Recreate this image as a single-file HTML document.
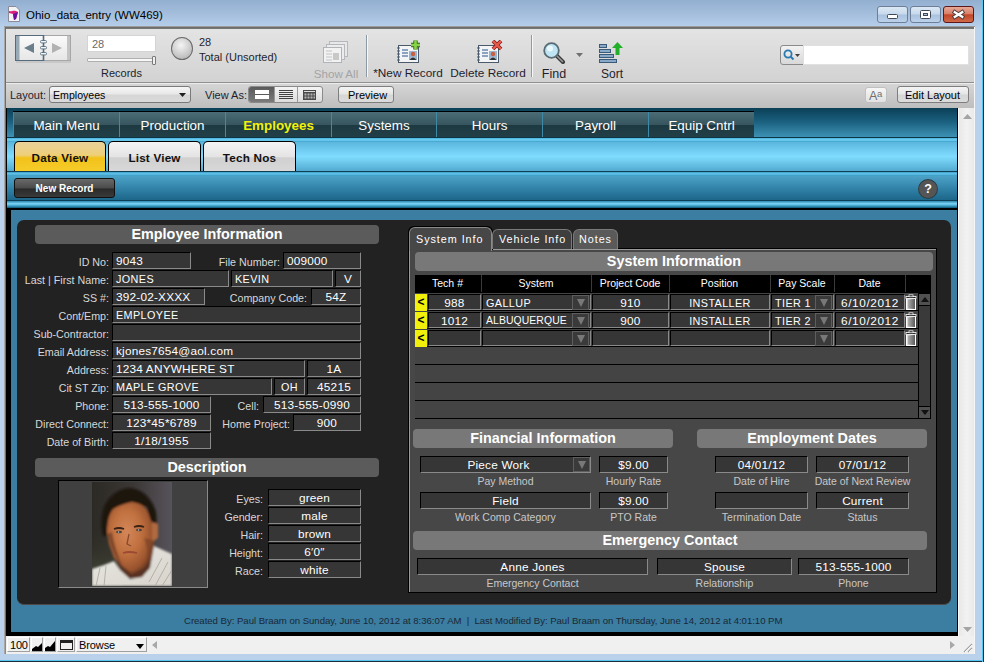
<!DOCTYPE html>
<html><head><meta charset="utf-8">
<style>
*{margin:0;padding:0;box-sizing:border-box}
html,body{width:984px;height:662px;overflow:hidden;background:#b9d1ea;font-family:"Liberation Sans",sans-serif}
.a{position:absolute}
.t{position:absolute;white-space:nowrap;line-height:1}
#title{left:0;top:0;width:984px;height:28px;background:linear-gradient(#93afd0,#a4bedc 50%,#b8d0ec)}
.wb{position:absolute;top:6px;height:17px;border:1px solid #6d7f97;border-radius:3px;background:linear-gradient(#e4edf7,#c7d7ea 45%,#aec3de 50%,#c3d6ec)}
#toolbar{left:4px;top:26px;width:971px;height:57px;background:linear-gradient(#e4e4e4,#d2d2d2);border-top:1px solid #9a9a9a;box-shadow:inset 0 1px 0 #6e6e6e,inset 0 2px 0 #767676}
#layoutbar{left:5px;top:82px;width:970px;height:26px;background:linear-gradient(#d6d6d6,#bebebe);border-top:1px solid #909090;box-shadow:inset 0 1px 0 #ececec;border-left:1px solid #8a8a8a}
.btn{position:absolute;border:1px solid #7e7e7e;border-radius:3px;background:linear-gradient(#f4f4f4,#e6e6e6 45%,#d6d6d6 55%,#dcdcdc);font-size:11px;color:#000;text-align:center}
.tl{font-size:11px;color:#1e1e2e}
</style></head><body>
<!-- title bar -->
<div id="title" class="a"></div>
<svg class="a" style="left:8px;top:6px" width="12" height="16" viewBox="0 0 12 16">
<path d="M0.5 0.5H8L11.5 4V15.5H0.5Z" fill="#f4f4f4" stroke="#8a8a9a"/>
<path d="M1 5C3 6 5 4 8 5L10 6 8 13 6 14 5 8 1 7Z" fill="#e0207a"/>
<path d="M5 8 6 14 8 13 10 6Z" fill="#6a10a0"/>
</svg>
<div class="t" style="left:26px;top:10px;font-size:11.5px;color:#000">Ohio_data_entry (WW469)</div>
<div class="wb" style="left:877px;width:31px;background:linear-gradient(#dce8f4,#c8d9ec 48%,#a9c1dd 52%,#bcd2ea)"><svg class="a" style="left:0;top:0" width="29" height="15"><rect x="9.5" y="7.5" width="10" height="4" rx="1" fill="#fff" stroke="#404858"/></svg></div>
<div class="wb" style="left:910px;width:31px;background:linear-gradient(#dce8f4,#c8d9ec 48%,#a9c1dd 52%,#bcd2ea)"><svg class="a" style="left:0;top:0" width="29" height="15"><rect x="9.5" y="3.5" width="10" height="8" rx="1" fill="#fff" stroke="#404858"/><rect x="12.5" y="6.5" width="4" height="2" fill="#a8c4dc" stroke="#404858"/></svg></div>
<div class="wb" style="left:943px;width:31px;border-color:#5a1818;background:linear-gradient(#e8a898,#d88068 45%,#c24628 52%,#d06a4a)"><svg class="a" style="left:0;top:0" width="29" height="15"><path d="M10.8 5.2 18.2 9.8M18.2 5.2 10.8 9.8" stroke="#4a3838" stroke-width="4.2" stroke-linecap="square"/><path d="M10.8 5.2 18.2 9.8M18.2 5.2 10.8 9.8" stroke="#fff" stroke-width="2.4" stroke-linecap="square"/></svg></div>

<!-- toolbar -->
<div id="toolbar" class="a"></div>
<div id="layoutbar" class="a"></div>
<!-- book icon -->
<svg class="a" style="left:14px;top:34px" width="58" height="30" viewBox="0 0 58 30">
<defs><linearGradient id="pg" x1="0" y1="0" x2="0" y2="1"><stop offset="0" stop-color="#fbfbfb"/><stop offset="1" stop-color="#e6e6e6"/></linearGradient></defs>
<rect x="2" y="26" width="55" height="3" fill="#000" opacity=".08"/>
<rect x="29.5" y="1.5" width="27" height="25" fill="url(#pg)" stroke="#a6a6a6"/>
<rect x="53" y="2" width="3" height="24" fill="#c4c4c4"/>
<rect x="1.5" y="1.5" width="28" height="25" fill="url(#pg)" stroke="#566c7c"/>
<rect x="2" y="2" width="3.5" height="24" fill="#98aab6"/>
<path d="M10 14 20 9V19Z" fill="#6a7e8c"/>
<path d="M38 9 48 14 38 19Z" fill="#b2b2b2"/>
<path d="M29.5 1V27" stroke="#566c7c" stroke-width="1.6"/>
<rect x="26.5" y="6.5" width="6" height="2.4" rx="1" fill="#f4f4f4" stroke="#566c7c" stroke-width=".9"/>
<rect x="26.5" y="12.5" width="6" height="2.4" rx="1" fill="#f4f4f4" stroke="#566c7c" stroke-width=".9"/>
<rect x="26.5" y="18.5" width="6" height="2.4" rx="1" fill="#f4f4f4" stroke="#566c7c" stroke-width=".9"/>
</svg>
<!-- record input -->
<div class="a" style="left:87px;top:35px;width:69px;height:17px;background:#fff;border:1px solid #d4d4d4"></div>
<div class="t" style="left:92px;top:39px;font-size:11px;color:#6a6a6a">28</div>
<div class="a" style="left:87px;top:58px;width:67px;height:4px;border:1px solid #b0b0b0;background:#f8f8f8;border-radius:1px"></div>
<div class="a" style="left:152px;top:56px;width:4px;height:9px;border:1px solid #7a7a7a;background:#f0f0f0;border-radius:1px"></div>
<div class="t tl" style="left:101px;top:68px;font-size:11px">Records</div>
<div class="a" style="left:171px;top:37px;width:22px;height:23px;border-radius:50%;border:1px solid #6a6a6a;background:radial-gradient(circle at 45% 35%,#f4f4f4,#c8c8c8 60%,#a8a8a8)"></div>
<div class="t tl" style="left:199px;top:37px">28</div>
<div class="t tl" style="left:199px;top:52px">Total (Unsorted)</div>
<!-- show all -->
<svg class="a" style="left:323px;top:41px" width="26" height="23" viewBox="0 0 26 23">
<rect x="6.5" y="0.5" width="18" height="15" fill="#e8e8e8" stroke="#b4b8bc"/>
<rect x="3.5" y="3.5" width="18" height="15" fill="#ececec" stroke="#b4b8bc"/>
<rect x="0.5" y="6.5" width="18" height="15" fill="#f2f2f2" stroke="#b0b4b8"/>
<path d="M3 10h6M3 13h6M3 16h6M3 19h6" stroke="#c0c4c8"/><rect x="10" y="12" width="6" height="7" fill="#c8c8c8"/></svg>
<div class="t tl" style="left:296px;width:80px;text-align:center;top:68px;color:#a4a4a4;font-size:11.6px">Show All</div>
<div class="a" style="left:366px;top:35px;width:1px;height:42px;background:#8c9aa6;box-shadow:1px 0 0 #f8f8f8"></div>
<!-- new record -->
<svg class="a" style="left:397px;top:40px" width="26" height="24" viewBox="0 0 26 24">
<rect x="1.5" y="5.5" width="20" height="17" fill="#f2f4f6" stroke="#4a5a6a"/>
<path d="M0 8h3M0 11h3M0 14h3M0 17h3M0 20h3" stroke="#4a5a6a"/>
<path d="M5 10h6M5 13h6M5 16h6" stroke="#6a8ab0" stroke-width="1.5"/>
<rect x="12" y="11" width="8" height="9" fill="#9ab4d0"/><circle cx="16" cy="14" r="2.2" fill="#c86040"/><path d="M12.5 20Q16 15 19.5 20Z" fill="#303030"/>
<path d="M14 5h9M18.5 .5v9" stroke="#2a6a1a" stroke-width="4.4"/><path d="M14 5h9M18.5 .5v9" stroke="#8ad24a" stroke-width="2.6"/></svg>
<div class="t tl" style="left:368px;width:80px;text-align:center;top:68px;font-size:11.8px">*New Record</div>
<!-- delete record -->
<svg class="a" style="left:477px;top:40px" width="26" height="24" viewBox="0 0 26 24">
<rect x="1.5" y="5.5" width="20" height="17" fill="#f2f4f6" stroke="#4a5a6a"/>
<path d="M0 8h3M0 11h3M0 14h3M0 17h3M0 20h3" stroke="#4a5a6a"/>
<path d="M5 10h6M5 13h6M5 16h6" stroke="#6a8ab0" stroke-width="1.5"/>
<rect x="12" y="11" width="8" height="9" fill="#9ab4d0"/><circle cx="16" cy="14" r="2.2" fill="#c86040"/><path d="M12.5 20Q16 15 19.5 20Z" fill="#303030"/>
<path d="M16 1 24 9M24 1 16 9" stroke="#7a1a1a" stroke-width="3.8"/><path d="M16 1 24 9M24 1 16 9" stroke="#e85a4a" stroke-width="2.4"/></svg>
<div class="t tl" style="left:448px;width:80px;text-align:center;top:68px;font-size:11.8px">Delete Record</div>
<div class="a" style="left:531px;top:35px;width:1px;height:42px;background:#8c9aa6;box-shadow:1px 0 0 #f8f8f8"></div>
<!-- find -->
<svg class="a" style="left:543px;top:42px" width="23" height="22" viewBox="0 0 23 22">
<path d="M13 13 20 20" stroke="#3a3a3a" stroke-width="4" stroke-linecap="round"/><path d="M13.5 13.5 19.5 19.5" stroke="#9a9a9a" stroke-width="1.6" stroke-linecap="round"/>
<circle cx="8.5" cy="8.5" r="7.3" fill="#bfe4f4" stroke="#5a6a72" stroke-width="1.8"/><circle cx="7" cy="6.5" r="3" fill="#eaf8fc"/></svg>
<svg class="a" style="left:576px;top:53px" width="7" height="4"><path d="M0 0H7L3.5 4Z" fill="#707070"/></svg>
<div class="t tl" style="left:524px;width:60px;text-align:center;top:68px;font-size:12.5px">Find</div>
<!-- sort -->
<svg class="a" style="left:599px;top:41px" width="25" height="23" viewBox="0 0 25 23">
<rect x="0.5" y="3.5" width="7" height="3" fill="#8aa8c8" stroke="#3a5a7a"/><rect x="0.5" y="8.5" width="11" height="3" fill="#8aa8c8" stroke="#3a5a7a"/><rect x="0.5" y="13.5" width="14" height="3" fill="#8aa8c8" stroke="#3a5a7a"/><rect x="0.5" y="18.5" width="17" height="3" fill="#8aa8c8" stroke="#3a5a7a"/>
<path d="M18.5 1 24 7H20.5V14H16.5V7H13Z" fill="#22b02a"/></svg>
<div class="t tl" style="left:582px;width:60px;text-align:center;top:68px;font-size:12px">Sort</div>
<!-- search -->
<div class="a" style="left:780px;top:45px;width:24px;height:20px;border:1px solid #8a8a8a;border-radius:3px 0 0 3px;background:linear-gradient(#f2f2f2,#d8d8d8)"></div>
<svg class="a" style="left:783px;top:49px" width="18" height="12" viewBox="0 0 18 12"><circle cx="5" cy="5" r="3.6" fill="none" stroke="#2a7ab0" stroke-width="1.8"/><path d="M7.5 7.5 10.5 10.5" stroke="#2a7ab0" stroke-width="2"/><path d="M12 5h5l-2.5 3z" fill="#404040"/></svg>
<div class="a" style="left:803px;top:45px;width:166px;height:20px;background:#fff;border:1px solid #e0e0e0"></div>

<div class="t tl" style="left:10px;top:90px">Layout:</div>
<div class="btn" style="left:49px;top:86px;width:142px;height:17px;text-align:left;border-radius:3px;border-color:#7a7a7a;background:linear-gradient(#f6f6f6,#e8e8e8 45%,#d6d6d6 55%,#dadada)"><span class="t" style="left:3px;top:3px;font-size:10.6px">Employees</span><svg class="a" style="left:129px;top:6px" width="7" height="4"><path d="M0 0H7L3.5 4Z" fill="#202020"/></svg></div>
<div class="t tl" style="left:205px;top:90px">View As:</div>
<div class="a" style="left:248px;top:86px;width:75px;height:17px;border:1px solid #8a8a8a;border-radius:3px;background:linear-gradient(#f4f4f4,#dcdcdc);overflow:hidden">
<div class="a" style="left:0;top:0;width:25px;height:15px;background:linear-gradient(#5a5a5a,#7a7a7a)"></div>
<div class="a" style="left:25px;top:0;width:1px;height:15px;background:#9a9a9a"></div><div class="a" style="left:48px;top:0;width:1px;height:15px;background:#9a9a9a"></div>
<div class="a" style="left:6px;top:3px;width:14px;height:9px;background:#fff;border-bottom:2px solid #fff;box-shadow:inset 0 -4px 0 #fff"></div><div class="a" style="left:6px;top:7px;width:14px;height:1px;background:#5a5a5a"></div>
<svg class="a" style="left:30px;top:3px" width="14" height="10"><path d="M0 .5H14M0 2.5H14M0 4.5H14M0 6.5H14M0 8.5H14" stroke="#404040"/></svg>
<svg class="a" style="left:54px;top:3px" width="14" height="10"><rect x="0" y="0" width="13" height="10" fill="#4a4a4a"/><rect x="1" y="1" width="11" height="1" fill="#ddd"/><path d="M1.5 3.5h2v2h-2zM4.5 3.5h2v2h-2zM7.5 3.5h2v2h-2zM10.5 3.5h1.5v2h-1.5zM1.5 6.5h2v2h-2zM4.5 6.5h2v2h-2zM7.5 6.5h2v2h-2zM10.5 6.5h1.5v2h-1.5z" fill="#b4b4b4"/></svg>
</div>
<div class="btn" style="left:338px;top:86px;width:56px;height:17px;border-radius:3px"><span class="t" style="left:9px;top:3px;font-size:11px">Preview</span></div>
<div class="btn" style="left:865px;top:87px;width:22px;height:16px;border-color:#c0c0c0;background:linear-gradient(#f6f6f6,#e2e2e2)"><span class="t" style="left:3px;top:2px;font-size:12.5px;color:#6e6e6e;letter-spacing:-.5px">A</span><span class="t" style="left:11px;top:1px;font-size:9.5px;color:#6e6e6e">a</span></div>
<div class="btn" style="left:897px;top:86px;width:72px;height:17px"><span class="t" style="left:7px;top:3px;font-size:11px">Edit Layout</span></div>


<!-- FM content -->
<div class="a" style="left:6px;top:108px;width:952px;height:529px;background:#000"></div><div class="a" style="left:4px;top:27px;width:1px;height:627px;background:#a8a8a8"></div><div class="a" style="left:5px;top:27px;width:1px;height:627px;background:#6e6e6e"></div>
<div class="a" style="left:7px;top:108px;width:950px;height:33px;background:linear-gradient(#0b3f56,#1a5f7e 40%,#3f93b6 90%,#5ab2d4)"></div>
<!-- menu tabs -->
<div id="mtabs" class="a" style="left:13px;top:111px;width:741px;height:26px;background:#000"></div>
<div class="a" style="left:7px;top:137px;width:950px;height:1px;background:#0c3646"></div><div class="a" style="left:7px;top:138px;width:950px;height:4px;background:linear-gradient(#48b2da,#74d2f6 50%,#3a9ec6)"></div>
<!-- sub tab bar -->
<div class="a" style="left:7px;top:142px;width:950px;height:29px;background:linear-gradient(#5ab6dc,#80dcff 50%,#52aad0)"></div>
<div class="a" style="left:7px;top:171px;width:950px;height:1px;background:#0e3e54"></div>
<div class="a" style="left:7px;top:172px;width:950px;height:4px;background:linear-gradient(#3e9ec6,#62c4ec 45%,#3a98c0)"></div>
<div class="a" style="left:7px;top:176px;width:950px;height:24px;background:linear-gradient(#4ca2c8,#2e7ea4 60%,#1c6688)"></div>
<div class="a" style="left:7px;top:200px;width:950px;height:1px;background:#0e3e55"></div>
<div class="a" style="left:7px;top:201px;width:950px;height:7px;background:linear-gradient(#2a86ae,#7ed6f8 40%,#3a9ec6 70%,#0e5676)"></div>
<div class="a" style="left:11px;top:210px;width:946px;height:422px;background:#3b7ea2"></div>
<style>.mt{position:absolute;top:112px;height:25px;background:linear-gradient(#4b6c76,#36555e 52%,#1d3a43 52%,#223f48);color:#fff;font-size:13.4px;text-align:center;line-height:27px;border-left:1px solid #3f8aa6}
.st{position:absolute;top:141px;height:30px;border:1px solid #000;border-bottom:none;border-radius:5px 5px 0 0;font-weight:bold;font-size:11.7px;text-align:center;line-height:31px;color:#111;letter-spacing:.2px}</style>
<div class="mt" style="left:13px;width:106px;">Main Menu</div>
<div class="mt" style="left:119px;width:106px;">Production</div>
<div class="mt" style="left:225px;width:106px;font-weight:bold;color:#f2f20a;">Employees</div>
<div class="mt" style="left:331px;width:105px;">Systems</div>
<div class="mt" style="left:436px;width:106px;">Hours</div>
<div class="mt" style="left:542px;width:106px;">Payroll</div>
<div class="mt" style="left:648px;width:106px;">Equip Cntrl</div>
<div class="st" style="left:14px;width:92px;background:linear-gradient(#e8d29a,#efcf7a 45%,#f2c21a 55%,#f6cc2a)">Data View</div>
<div class="st" style="left:108px;width:93px;background:linear-gradient(#f4f4f4,#e4e4e4 50%,#d0d0d0 55%,#d8d8d8)">List View</div>
<div class="st" style="left:203px;width:93px;background:linear-gradient(#f4f4f4,#e4e4e4 50%,#d0d0d0 55%,#d8d8d8)">Tech Nos</div>
<div class="a" style="left:14px;top:178px;width:101px;height:20px;border:1px solid #111;border-radius:3px;background:linear-gradient(#6a6a6a,#4a4a4a 50%,#2a2a2a 55%,#3a3a3a);color:#fff;font-weight:bold;font-size:10px;text-align:center;line-height:19px">New Record</div>
<div class="a" style="left:919px;top:180px;width:18px;height:18px;border-radius:50%;background:#555;box-shadow:0 0 0 1px #2e3e46;color:#fff;font-weight:bold;font-size:12.5px;text-align:center;line-height:18px">?</div>
<style>
.card{position:absolute;left:17px;top:220px;width:934px;height:385px;background:#222;border-radius:7px;border-bottom:1px solid #4e4848}
.hb{position:absolute;height:19px;background:#5b5b5b;border-radius:4px;color:#fff;font-weight:bold;font-size:14.4px;text-align:center;line-height:19px}
.hb2{background:#787878}
.f{position:absolute;height:17px;background:#363636;border-top:1px solid #000;border-left:1px solid #000;border-right:1px solid #8a8a8a;border-bottom:1px solid #8a8a8a;color:#fff;font-size:11.8px;line-height:17px;letter-spacing:.2px;white-space:nowrap;overflow:hidden;padding-left:3px}
.c{text-align:center;padding-left:0}.sm{font-size:10.8px;letter-spacing:.4px}
.lb{position:absolute;color:#d8d8d8;font-size:10.7px;white-space:nowrap;line-height:1;text-align:right}
</style>
<div class="card"></div>
<div class="hb" style="left:35px;top:225px;width:344px">Employee Information</div>
<div class="lb" style="right:875px;top:257px">ID No:</div>
<div class="f" style="left:112px;top:252px;width:79px">9043</div>
<div class="lb" style="right:704px;top:257px">File Number:</div>
<div class="f" style="left:283px;top:252px;width:78px">009000</div>
<div class="lb" style="right:875px;top:275px">Last | First Name:</div>
<div class="f sm" style="left:112px;top:270px;width:117px">JONES</div>
<div class="f sm" style="left:231px;top:270px;width:102px">KEVIN</div>
<div class="f c" style="left:335px;top:270px;width:26px">V</div>
<div class="lb" style="right:875px;top:293px">SS #:</div>
<div class="f" style="left:112px;top:288px;width:93px">392-02-XXXX</div>
<div class="lb" style="right:677px;top:293px">Company Code:</div>
<div class="f c" style="left:311px;top:288px;width:50px">54Z</div>
<div class="lb" style="right:875px;top:311px">Cont/Emp:</div>
<div class="f sm" style="left:112px;top:306px;width:249px">EMPLOYEE</div>
<div class="lb" style="right:875px;top:329px">Sub-Contractor:</div>
<div class="f" style="left:112px;top:324px;width:249px"></div>
<div class="lb" style="right:875px;top:347px">Email Address:</div>
<div class="f" style="left:112px;top:342px;width:249px">kjones7654@aol.com</div>
<div class="lb" style="right:875px;top:365px">Address:</div>
<div class="f" style="left:112px;top:360px;width:193px">1234 ANYWHERE ST</div>
<div class="f c" style="left:307px;top:360px;width:54px">1A</div>
<div class="lb" style="right:875px;top:383px">Cit ST Zip:</div>
<div class="f sm" style="left:112px;top:378px;width:160px">MAPLE GROVE</div>
<div class="f c sm" style="left:274px;top:378px;width:31px">OH</div>
<div class="f c" style="left:307px;top:378px;width:54px">45215</div>
<div class="lb" style="right:875px;top:401px">Phone:</div>
<div class="f c" style="left:112px;top:396px;width:99px">513-555-1000</div>
<div class="lb" style="right:725px;top:401px">Cell:</div>
<div class="f c" style="left:263px;top:396px;width:98px">513-555-0990</div>
<div class="lb" style="right:875px;top:419px">Direct Connect:</div>
<div class="f c" style="left:112px;top:414px;width:99px">123*45*6789</div>
<div class="lb" style="right:694px;top:419px">Home Project:</div>
<div class="f c" style="left:293px;top:414px;width:68px">900</div>
<div class="lb" style="right:875px;top:437px">Date of Birth:</div>
<div class="f c" style="left:112px;top:432px;width:99px">1/18/1955</div>
<div class="hb" style="left:35px;top:458px;width:344px">Description</div>
<div class="a" style="left:58px;top:480px;width:150px;height:108px;background:#404040;border-top:1px solid #000;border-left:1px solid #000;border-right:1px solid #8a8a8a;border-bottom:1px solid #8a8a8a"></div>
<div id="photo" class="a" style="left:92px;top:482px;width:80px;height:104px;background:#3a3632;overflow:hidden"><svg width="80" height="104" viewBox="0 0 80 104">
<defs>
<linearGradient id="pbg" x1="0" y1="0" x2="1" y2="0"><stop offset="0" stop-color="#2c2a24"/><stop offset=".5" stop-color="#3a3634"/><stop offset="1" stop-color="#57535b"/></linearGradient>
<linearGradient id="pbl" x1="0" y1="0" x2="0" y2="1"><stop offset="0" stop-color="#2a2822" stop-opacity="0"/><stop offset="1" stop-color="#4a503f"/></linearGradient>
<radialGradient id="psk" cx=".42" cy=".42" r=".62"><stop offset="0" stop-color="#d4875a"/><stop offset=".5" stop-color="#c0703f"/><stop offset=".85" stop-color="#9a542e"/><stop offset="1" stop-color="#6e3a20"/></radialGradient>
<linearGradient id="psh" x1="0" y1="0" x2="1" y2="1"><stop offset="0" stop-color="#e8e8e2"/><stop offset="1" stop-color="#d8d4cc"/></linearGradient>
<filter id="pb1" x="-20%" y="-20%" width="140%" height="140%"><feGaussianBlur stdDeviation="0.9"/></filter>
<filter id="pb2" x="-50%" y="-50%" width="200%" height="200%"><feGaussianBlur stdDeviation="0.7"/></filter>
</defs>
<rect width="80" height="104" fill="url(#pbg)"/>
<rect x="0" y="40" width="30" height="64" fill="url(#pbl)"/>
<g filter="url(#pb1)">
<path d="M11 54C8 42 9 30 14 21 20 11 30 6 38 6 50 7 60 16 64 30L65 46 62 50 58 40 55 25 40 20 21 27 16 38 15 54Z" fill="#1e140e"/>
<path d="M15 50C15 40 17 32 21 27 28 23 34 21 40 20 48 21 55 24 58 36L62 46 62 62 60 76 52 86 40 92 30 84 22 76 17 62Z" fill="url(#psk)"/>
<path d="M60 40 66 42 66 56 60 60Z" fill="#b06a40"/>
<path d="M16 52C18 64 22 74 30 84 26 74 22 62 20 50Z" fill="#5a3020" opacity=".6"/>
<path d="M52 56C56 66 56 76 52 86 58 78 61 68 61 58Z" fill="#7a4226" opacity=".7"/>
<path d="M24 78 34 88 40 92 52 86 60 76 58 88 48 96 36 96 28 88Z" fill="#5a3220"/><path d="M0 87 12 83 22 79 28 88 38 97 50 95 58 86 62 64 80 72V104H0Z" fill="url(#psh)"/>
</g>
<g filter="url(#pb2)">
<path d="M22 47Q27 45 32 47M42 45Q47 43 52 45" stroke="#3a2214" stroke-width="1.8" fill="none"/>
<ellipse cx="27" cy="50" rx="3" ry="1.3" fill="#4a3a34"/><ellipse cx="47" cy="48" rx="3" ry="1.3" fill="#4a3a34"/>
<circle cx="26.5" cy="50" r=".8" fill="#b8c8c8"/><circle cx="46.5" cy="48" r=".8" fill="#b8c8c8"/>
<path d="M37 52 35 62 39 64" stroke="#8a4a2a" stroke-width="1.3" fill="none"/>
<path d="M31 71Q37 69 45 71" stroke="#9a4a34" stroke-width="1.8" fill="none"/>
<path d="M4 104 8 86M12 104 14 84M57 100 70 76M63 104 76 80M70 104 80 88" stroke="#a8a49c" stroke-width=".8"/>
</g>
</svg></div>
<div class="lb" style="right:721px;top:494px">Eyes:</div>
<div class="f c" style="left:268px;top:489px;width:93px">green</div>
<div class="lb" style="right:721px;top:512px">Gender:</div>
<div class="f c" style="left:268px;top:507px;width:93px">male</div>
<div class="lb" style="right:721px;top:530px">Hair:</div>
<div class="f c" style="left:268px;top:525px;width:93px">brown</div>
<div class="lb" style="right:721px;top:548px">Height:</div>
<div class="f c" style="left:268px;top:543px;width:93px">6&#8242;0&#8243;</div>
<div class="lb" style="right:721px;top:566px">Race:</div>
<div class="f c" style="left:268px;top:561px;width:93px">white</div>
<style>.tab{position:absolute;border:1px solid #7a7a7a;border-bottom:none;border-radius:6px 6px 0 0;color:#fff;font-size:10.8px;line-height:1;white-space:nowrap;letter-spacing:.95px}
.ph{position:absolute;height:17px;background:#000;color:#fff;font-size:10.5px;text-align:center;line-height:17px}
.dd{position:absolute;width:17px;height:15px;border:1px solid #5e5e5e;background:#3a3a3a}.dd:after{content:"";position:absolute;left:3.5px;top:3px;border-left:4.5px solid transparent;border-right:4.5px solid transparent;border-top:8px solid #787878}
.sl{position:absolute;color:#c8c8c8;font-size:10.5px;white-space:nowrap;line-height:1;text-align:center}</style>
<div class="a" style="left:408px;top:248px;width:529px;height:345px;background:#474747;border:1px solid #000;box-shadow:inset 1px 1px 0 #9a9a9a"></div>
<div class="tab" style="left:409px;top:227px;width:83px;height:24px;background:#474747;border-color:#8a8a8a;box-shadow:-1px -1px 0 #000,1px -1px 0 #000"><span class="t" style="left:6px;top:6px">System Info</span></div>
<div class="tab" style="left:492px;top:229px;width:80px;height:20px;background:#3e3e3e"><span class="t" style="left:6px;top:4px">Vehicle Info</span></div>
<div class="tab" style="left:573px;top:229px;width:45px;height:20px;background:#5a5a5a"><span class="t" style="left:5px;top:4px">Notes</span></div>
<div class="hb hb2" style="left:415px;top:252px;width:518px">System Information</div>
<div class="a" style="left:415px;top:275px;width:516px;height:144px;background:#000"></div>
<div class="ph" style="left:415px;top:275px;width:65px">Tech #</div>
<div class="ph" style="left:482px;top:275px;width:108px">System</div>
<div class="ph" style="left:592px;top:275px;width:76px">Project Code</div>
<div class="ph" style="left:670px;top:275px;width:99px">Position</div>
<div class="ph" style="left:771px;top:275px;width:62px">Pay Scale</div>
<div class="ph" style="left:835px;top:275px;width:69px">Date</div>
<div class="ph" style="left:906px;top:275px;width:24px"></div>
<div class="a" style="left:481px;top:275px;width:1px;height:17px;background:#3a3a3a"></div><div class="a" style="left:591px;top:275px;width:1px;height:17px;background:#3a3a3a"></div><div class="a" style="left:669px;top:275px;width:1px;height:17px;background:#3a3a3a"></div><div class="a" style="left:770px;top:275px;width:1px;height:17px;background:#3a3a3a"></div><div class="a" style="left:834px;top:275px;width:1px;height:17px;background:#3a3a3a"></div><div class="a" style="left:905px;top:275px;width:1px;height:17px;background:#3a3a3a"></div>
<div class="a" style="left:415px;top:293px;width:503px;height:126px;background:#444"></div>
<div class="a" style="left:415px;top:310px;width:503px;height:1px;background:#000"></div>
<div class="a" style="left:415px;top:328px;width:503px;height:1px;background:#000"></div>
<div class="a" style="left:415px;top:346px;width:503px;height:1px;background:#000"></div>
<div class="a" style="left:415px;top:364px;width:503px;height:1px;background:#000"></div>
<div class="a" style="left:415px;top:382px;width:503px;height:1px;background:#000"></div>
<div class="a" style="left:415px;top:400px;width:503px;height:1px;background:#000"></div>
<div class="a" style="left:415px;top:418px;width:503px;height:1px;background:#000"></div>
<div class="a" style="left:415px;top:294px;width:12px;height:17px;background:#f0f00a;color:#000;font-weight:bold;font-size:12px;line-height:17px;text-align:center">&lt;</div>
<div class="f c" style="height:16px;line-height:16px;left:428px;top:294px;width:53px">988</div>
<div class="f sm" style="height:16px;line-height:16px;left:482px;top:294px;width:109px">GALLUP</div><div class="dd" style="left:572px;top:295px"></div>
<div class="f c" style="height:16px;line-height:16px;left:592px;top:294px;width:77px">910</div>
<div class="f c sm" style="height:16px;line-height:16px;left:670px;top:294px;width:100px">INSTALLER</div>
<div class="f sm" style="height:16px;line-height:16px;left:771px;top:294px;width:63px">TIER 1</div><div class="dd" style="left:815px;top:295px"></div>
<div class="f c" style="height:16px;line-height:16px;left:835px;top:294px;width:70px;letter-spacing:.6px">6/10/2012</div>
<svg class="a" style="left:905px;top:294px" width="12" height="17" viewBox="0 0 12 17"><defs><linearGradient id="tg" x1="0" x2="1"><stop offset="0" stop-color="#e8e8e8"/><stop offset=".4" stop-color="#a8a8a8"/><stop offset="1" stop-color="#505050"/></linearGradient></defs><rect x="1.5" y="4.5" width="9" height="11" fill="url(#tg)" stroke="#fff"/><rect x="1" y="2.5" width="10" height="2" fill="#222" stroke="#fff" stroke-width=".8"/><rect x="4" y="0.8" width="4" height="2" fill="#333" stroke="#fff" stroke-width=".7"/><path d="M4 6V14M6 6V14M8 6V14" stroke="#666" stroke-width=".6"/></svg>
<div class="a" style="left:415px;top:312px;width:12px;height:17px;background:#f0f00a;color:#000;font-weight:bold;font-size:12px;line-height:17px;text-align:center">&lt;</div>
<div class="f c" style="height:16px;line-height:16px;left:428px;top:312px;width:53px">1012</div>
<div class="f sm" style="height:16px;line-height:16px;left:482px;top:312px;width:109px;font-size:10.4px;letter-spacing:.1px">ALBUQUERQUE</div><div class="dd" style="left:572px;top:313px"></div>
<div class="f c" style="height:16px;line-height:16px;left:592px;top:312px;width:77px">900</div>
<div class="f c sm" style="height:16px;line-height:16px;left:670px;top:312px;width:100px">INSTALLER</div>
<div class="f sm" style="height:16px;line-height:16px;left:771px;top:312px;width:63px">TIER 2</div><div class="dd" style="left:815px;top:313px"></div>
<div class="f c" style="height:16px;line-height:16px;left:835px;top:312px;width:70px;letter-spacing:.6px">6/10/2012</div>
<svg class="a" style="left:905px;top:312px" width="12" height="17" viewBox="0 0 12 17"><defs><linearGradient id="tg" x1="0" x2="1"><stop offset="0" stop-color="#e8e8e8"/><stop offset=".4" stop-color="#a8a8a8"/><stop offset="1" stop-color="#505050"/></linearGradient></defs><rect x="1.5" y="4.5" width="9" height="11" fill="url(#tg)" stroke="#fff"/><rect x="1" y="2.5" width="10" height="2" fill="#222" stroke="#fff" stroke-width=".8"/><rect x="4" y="0.8" width="4" height="2" fill="#333" stroke="#fff" stroke-width=".7"/><path d="M4 6V14M6 6V14M8 6V14" stroke="#666" stroke-width=".6"/></svg>
<div class="a" style="left:415px;top:330px;width:12px;height:17px;background:#f0f00a;color:#000;font-weight:bold;font-size:12px;line-height:17px;text-align:center">&lt;</div>
<div class="f c" style="height:16px;line-height:16px;left:428px;top:330px;width:53px"></div>
<div class="f" style="height:16px;line-height:16px;left:482px;top:330px;width:109px"></div><div class="dd" style="left:572px;top:331px"></div>
<div class="f c" style="height:16px;line-height:16px;left:592px;top:330px;width:77px"></div>
<div class="f c" style="height:16px;line-height:16px;left:670px;top:330px;width:100px"></div>
<div class="f" style="height:16px;line-height:16px;left:771px;top:330px;width:63px"></div><div class="dd" style="left:815px;top:331px"></div>
<div class="f c" style="height:16px;line-height:16px;left:835px;top:330px;width:70px"></div>
<svg class="a" style="left:905px;top:330px" width="12" height="17" viewBox="0 0 12 17"><defs><linearGradient id="tg" x1="0" x2="1"><stop offset="0" stop-color="#e8e8e8"/><stop offset=".4" stop-color="#a8a8a8"/><stop offset="1" stop-color="#505050"/></linearGradient></defs><rect x="1.5" y="4.5" width="9" height="11" fill="url(#tg)" stroke="#fff"/><rect x="1" y="2.5" width="10" height="2" fill="#222" stroke="#fff" stroke-width=".8"/><rect x="4" y="0.8" width="4" height="2" fill="#333" stroke="#fff" stroke-width=".7"/><path d="M4 6V14M6 6V14M8 6V14" stroke="#666" stroke-width=".6"/></svg>
<div class="a" style="left:918px;top:293px;width:13px;height:126px;background:#3a3a3a;border:1px solid #000"></div>
<div class="a" style="left:919px;top:294px;width:11px;height:12px;background:#505050;border-bottom:1px solid #000"></div><svg class="a" style="left:921px;top:297px" width="8" height="5"><path d="M0 5H8L4 0Z" fill="#111"/></svg>
<div class="a" style="left:919px;top:406px;width:11px;height:12px;background:#505050;border-top:1px solid #000"></div><svg class="a" style="left:921px;top:410px" width="8" height="5"><path d="M0 0H8L4 5Z" fill="#111"/></svg>
<div class="hb hb2" style="left:413px;top:429px;width:260px">Financial Information</div>
<div class="hb hb2" style="left:697px;top:429px;width:230px">Employment Dates</div>
<div class="f c" style="left:420px;top:456px;width:171px;padding-right:14px">Piece Work</div><div class="dd" style="left:573px;top:457px"></div>
<div class="f c" style="left:599px;top:456px;width:69px">$9.00</div>
<div class="sl" style="left:420px;top:476px;width:171px">Pay Method</div><div class="sl" style="left:599px;top:476px;width:69px">Hourly Rate</div>
<div class="f c" style="left:420px;top:492px;width:171px">Field</div>
<div class="f c" style="left:599px;top:492px;width:69px">$9.00</div>
<div class="sl" style="left:420px;top:512px;width:171px">Work Comp Category</div><div class="sl" style="left:599px;top:512px;width:69px">PTO Rate</div>
<div class="f c" style="left:715px;top:456px;width:93px">04/01/12</div><div class="f c" style="left:816px;top:456px;width:93px">07/01/12</div>
<div class="sl" style="left:715px;top:476px;width:93px">Date of Hire</div><div class="sl" style="left:810px;top:476px;width:105px">Date of Next Review</div>
<div class="f c" style="left:715px;top:492px;width:93px"></div><div class="f c" style="left:816px;top:492px;width:93px">Current</div>
<div class="sl" style="left:715px;top:512px;width:93px">Termination Date</div><div class="sl" style="left:816px;top:512px;width:93px">Status</div>
<div class="hb hb2" style="left:413px;top:531px;width:514px">Emergency Contact</div>
<div class="f c" style="left:417px;top:558px;width:231px">Anne Jones</div><div class="f c" style="left:657px;top:558px;width:135px">Spouse</div><div class="f c" style="left:798px;top:558px;width:111px">513-555-1000</div>
<div class="sl" style="left:417px;top:578px;width:231px">Emergency Contact</div><div class="sl" style="left:657px;top:578px;width:135px">Relationship</div><div class="sl" style="left:798px;top:578px;width:111px">Phone</div>
<div class="t" style="left:184px;top:616px;font-size:9.6px;color:#1a2836;letter-spacing:-.03px">Created By: Paul Braam on Sunday, June 10, 2012 at 8:36:07 AM&nbsp; |&nbsp; Last Modified By: Paul Braam on Thursday, June 14, 2012 at 4:01:10 PM</div>

<!-- vertical scrollbar -->
<div class="a" style="left:958px;top:108px;width:17px;height:528px;background:linear-gradient(90deg,#e8e8e8,#f2f2f2 50%,#e8e8e8);border-left:1px solid #fafafa"></div>
<svg class="a" style="left:963px;top:114px" width="9" height="5"><path d="M0 5H9L4.5 0Z" fill="#a4a4a4"/></svg>
<svg class="a" style="left:963px;top:627px" width="9" height="5"><path d="M0 0H9L4.5 5Z" fill="#a4a4a4"/></svg>
<!-- status bar -->
<div class="a" style="left:5px;top:636px;width:970px;height:18px;background:#f0f0f0;border-left:1px solid #8a8a8a"></div>
<div class="a" style="left:7px;top:637px;width:23px;height:15px;border:1px solid;border-color:#fff #a0a0a0 #a0a0a0 #fff;background:#f0f0f0"></div>
<div class="t" style="left:10px;top:640px;font-size:11px;color:#000;letter-spacing:-0.2px">100</div>
<div class="a" style="left:31px;top:637px;width:12px;height:15px;border:1px solid;border-color:#fff #a0a0a0 #a0a0a0 #fff"></div>
<svg class="a" style="left:32px;top:640px" width="11" height="11"><path d="M0 11V9L4 6 6 7 10 3V11Z" fill="#000"/></svg>
<div class="a" style="left:44px;top:637px;width:12px;height:15px;border:1px solid;border-color:#fff #a0a0a0 #a0a0a0 #fff"></div>
<svg class="a" style="left:45px;top:640px" width="11" height="11"><path d="M0 11V8L3 6 5 7 10 1V11Z" fill="#000"/></svg>
<div class="a" style="left:57px;top:637px;width:18px;height:15px;border:1px solid;border-color:#fff #a0a0a0 #a0a0a0 #fff"></div>
<div class="a" style="left:60px;top:640px;width:13px;height:10px;border:1px solid #222;border-top:3px solid #222"></div>
<div class="a" style="left:76px;top:637px;width:71px;height:15px;border:1px solid;border-color:#fff #a0a0a0 #a0a0a0 #fff"></div>
<div class="t" style="left:79px;top:640px;font-size:11px;color:#000;letter-spacing:-.1px">Browse</div>
<svg class="a" style="left:136px;top:644px" width="8" height="5"><path d="M0 0H8L4 5Z" fill="#000"/></svg>
<svg class="a" style="left:152px;top:641px" width="5" height="8"><path d="M5 0V8L0 4Z" fill="#a8a8a8"/></svg>
<svg class="a" style="left:950px;top:641px" width="5" height="8"><path d="M0 0V8L5 4Z" fill="#a8a8a8"/></svg>
<svg class="a" style="left:961px;top:641px" width="12" height="12"><path d="M11 3 3 11M11 7 7 11" stroke="#a0a0a0" stroke-width="1.2"/><path d="M11 4 4 11M11 8 8 11" stroke="#fff" stroke-width=".8"/></svg>
<div class="a" style="left:0;top:660px;width:983px;height:1px;background:#56c6ee"></div><div class="a" style="left:0;top:661px;width:984px;height:1px;background:#1e2e3e"></div>
<div class="a" style="left:974px;top:27px;width:1px;height:627px;background:#f4f6f8"></div><div class="a" style="left:982px;top:0;width:1px;height:662px;background:#56c6ee"></div><div class="a" style="left:983px;top:0;width:1px;height:662px;background:#1e2e3e"></div>
</body></html>
